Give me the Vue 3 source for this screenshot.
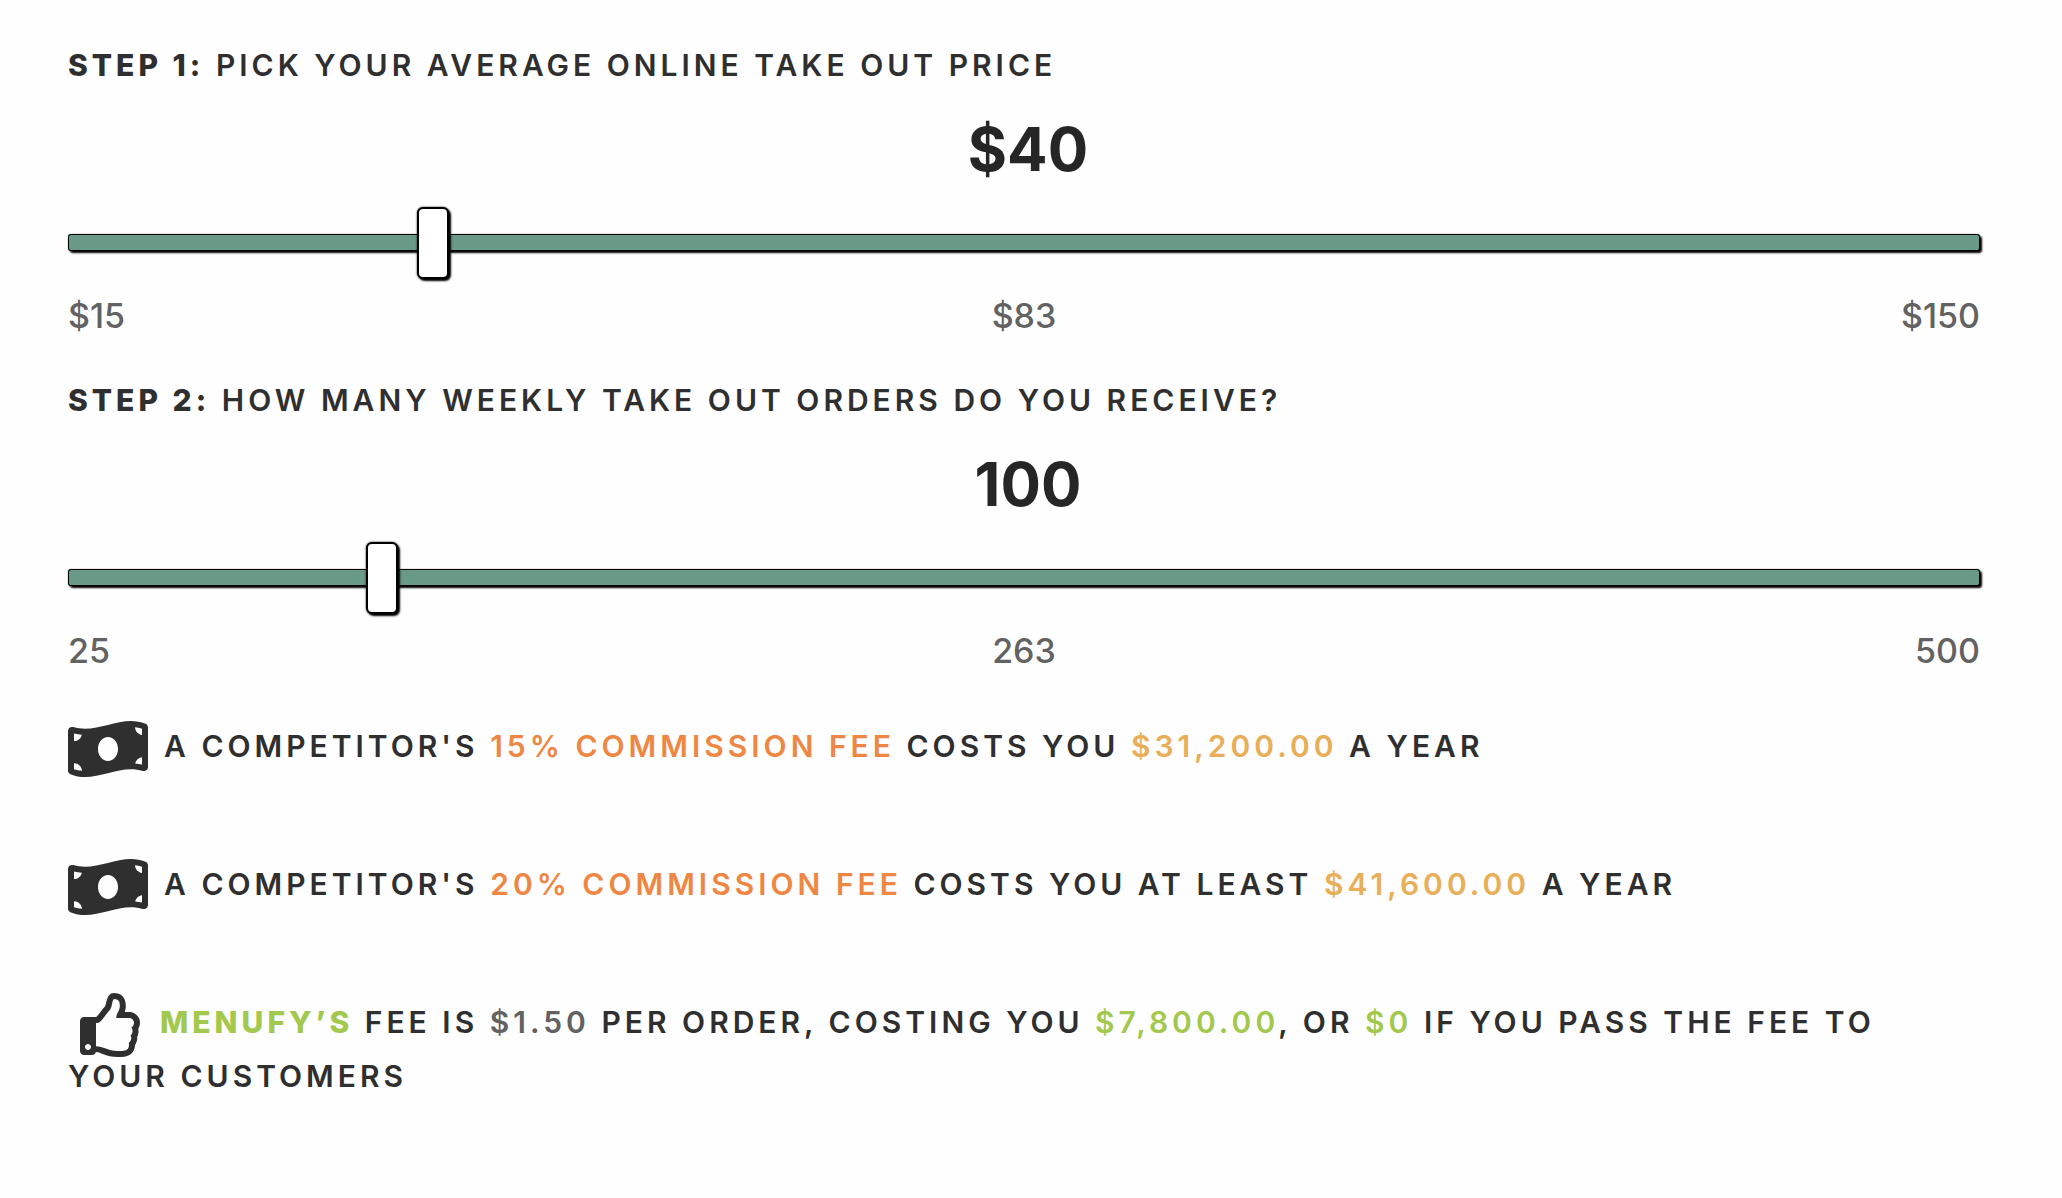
<script setup>
import { computed, ref } from 'vue'

const price = ref(40)
const orders = ref(100)

const yearly = computed(() => price.value * orders.value * 52)
const money = (n) =>
  '$' + n.toLocaleString('en-US', { minimumFractionDigits: 2, maximumFractionDigits: 2 })
</script>

<template>
  <main class="calculator">
    <section class="step">
      <h2 class="line"><label for="price"><strong>STEP 1:</strong> PICK YOUR AVERAGE ONLINE TAKE OUT PRICE</label></h2>
      <output class="value" for="price">${{ price }}</output>
      <input id="price" v-model.number="price" class="slider" type="range" min="15" max="150" />
      <div class="scale"><span>$15</span><span>$83</span><span>$150</span></div>
    </section>

    <section class="step">
      <h2 class="line"><label for="orders"><strong>STEP 2:</strong> HOW MANY WEEKLY TAKE OUT ORDERS DO YOU RECEIVE?</label></h2>
      <output class="value" for="orders">{{ orders }}</output>
      <input id="orders" v-model.number="orders" class="slider" type="range" min="25" max="500" />
      <div class="scale"><span>25</span><span>263</span><span>500</span></div>
    </section>

    <section class="results">
      <p v-for="rate in [15, 20]" :key="rate" class="line">
        <svg class="icon bill" viewBox="0 0 640 512" aria-hidden="true">
          <path d="M621.16 54.46C582.37 38.19 543.55 32 504.75 32c-123.17-.01-246.33 62.34-369.5 62.34-30.89 0-61.76-3.92-92.65-13.72-3.47-1.1-6.95-1.62-10.35-1.62C15.04 79 0 92.32 0 110.81v317.26c0 12.63 7.23 24.6 18.84 29.46C57.63 473.81 96.45 480 135.25 480c123.17 0 246.34-62.35 369.51-62.35 30.89 0 61.76 3.92 92.65 13.72 3.47 1.1 6.95 1.62 10.35 1.62 17.21 0 32.25-13.32 32.25-31.81V83.93c-.01-12.64-7.24-24.6-18.85-29.47zM48 132.22c20.12 5.04 41.12 7.57 62.72 8.93C104.84 170.54 79 192.69 48 192.69v-60.47zm0 285v-47.78c34.37 0 62.18 27.27 63.71 61.4-22.53-1.81-43.59-6.31-63.71-13.62zM320 352c-44.19 0-80-42.99-80-96 0-53.02 35.82-96 80-96s80 42.98 80 96c0 53.03-35.83 96-80 96zm272 27.78c-17.52-4.39-35.71-6.85-54.32-8.44 5.87-26.08 27.5-45.88 54.32-49.28v57.72zm0-236.11c-30.89-3.91-54.86-29.7-55.81-61.55 19.54 2.17 38.09 6.23 55.81 12.66v48.89z" />
        </svg>A COMPETITOR'S <span class="orange">{{ rate }}% COMMISSION FEE</span> COSTS YOU
        <template v-if="rate === 20">AT LEAST </template><span class="amber">{{ money((yearly * rate) / 100) }}</span> A YEAR
      </p>
      <p class="line">
        <svg class="icon thumb" viewBox="0 0 512 512" aria-hidden="true">
          <path d="M466.27 286.69C475.04 271.84 480 256 480 236.85c0-44.015-37.218-85.58-85.82-85.58H357.7c4.92-12.81 8.85-28.13 8.85-46.54C366.55 31.936 328.86 0 271.28 0c-61.607 0-58.093 94.933-71.76 108.6-22.747 22.747-49.615 66.447-68.76 83.4H32c-17.673 0-32 14.327-32 32v240c0 17.673 14.327 32 32 32h64c14.893 0 27.408-10.174 30.978-23.95 44.509 1.001 75.06 39.94 177.802 39.94 7.22 0 15.22.01 22.22.01 77.117 0 111.986-39.423 112.94-95.33 13.319-18.425 20.299-43.122 17.34-66.99 9.854-18.452 13.664-40.343 8.99-62.99zm-61.75 53.83c12.56 21.13 1.26 49.41-13.94 57.57 7.7 48.78-17.608 65.9-53.12 65.9h-37.82c-71.639 0-118.029-37.82-171.64-37.82V240h10.92c28.36 0 67.98-70.89 94.54-97.46 28.36-28.36 18.91-75.63 37.82-94.54 47.27 0 47.27 32.98 47.27 56.73 0 39.17-28.36 56.72-28.36 94.54h103.99c21.11 0 37.73 18.91 37.82 37.82.09 18.9-12.82 37.81-22.27 37.81 13.489 14.555 16.371 45.236-5.21 65.62zM88 432c0 13.255-10.745 24-24 24s-24-10.745-24-24 10.745-24 24-24 24 10.745 24 24z" />
        </svg><strong class="green">MENUFY’S</strong> FEE IS <span class="gray">$1.50</span> PER ORDER, COSTING YOU
        <span class="green">{{ money(orders * 52 * 1.5) }}</span>, OR <span class="green">$0</span> IF YOU PASS THE FEE TO YOUR CUSTOMERS
      </p>
    </section>
  </main>
</template>

<style>
body {
  margin: 0;
  background: #fefefe;
}
</style>

<style scoped>
.calculator {
  padding: 38px 82px 94px 68px;
  font-family: Inter, "Open Sans", sans-serif;
  color: #2f2f2f;
}

.step {
  display: flex;
  flex-direction: column;
  margin-bottom: 30px;
}

.line {
  margin: 0;
  font-size: 30px;
  font-weight: 600;
  line-height: 54px;
  letter-spacing: 4px;
}

.line strong {
  font-weight: 800;
}

.value {
  margin-top: 17px;
  padding-left: 8px;
  font-size: 60px;
  font-weight: 700;
  line-height: 80px;
  text-align: center;
  color: #262626;
}

.slider {
  appearance: none;
  width: 100%;
  height: 72px;
  margin: 17px 0 11px;
  background: transparent;
}

.slider::-webkit-slider-runnable-track {
  box-sizing: border-box;
  height: 17px;
  border: 1px solid #010101;
  border-radius: 3px;
  background: #689a87;
  box-shadow: 2px 2px 2px #000, 0 0 1px #0d0d0d;
}

.slider::-webkit-slider-thumb {
  appearance: none;
  box-sizing: border-box;
  width: 32px;
  height: 72px;
  margin-top: -28px;
  border: 2px solid #000;
  border-radius: 6px;
  background: #fff;
  box-shadow: 2px 2px 2px #000, 0 0 2px #0d0d0d;
}

.scale {
  display: flex;
  justify-content: space-between;
  font-size: 34px;
  font-weight: 500;
  line-height: 54px;
  color: #626262;
}

.scale span {
  flex: 1;
  text-align: center;
}

.scale span:first-child {
  text-align: left;
}

.scale span:last-child {
  text-align: right;
}

.results {
  display: flex;
  flex-direction: column;
  gap: 84px;
  margin-top: 41px;
}

.icon {
  height: 64px;
  margin-block: -16px;
  vertical-align: -8px;
  fill: #2f2f2f;
}

.bill {
  width: 80px;
  margin-right: 16px;
}

.thumb {
  width: 64px;
  margin-left: 12px;
  margin-right: 16px;
}

.orange {
  color: #ee8743;
}

.amber {
  color: #e8ae58;
}

.green {
  color: #a2c84e;
}

.gray {
  color: #626262;
}
</style>
